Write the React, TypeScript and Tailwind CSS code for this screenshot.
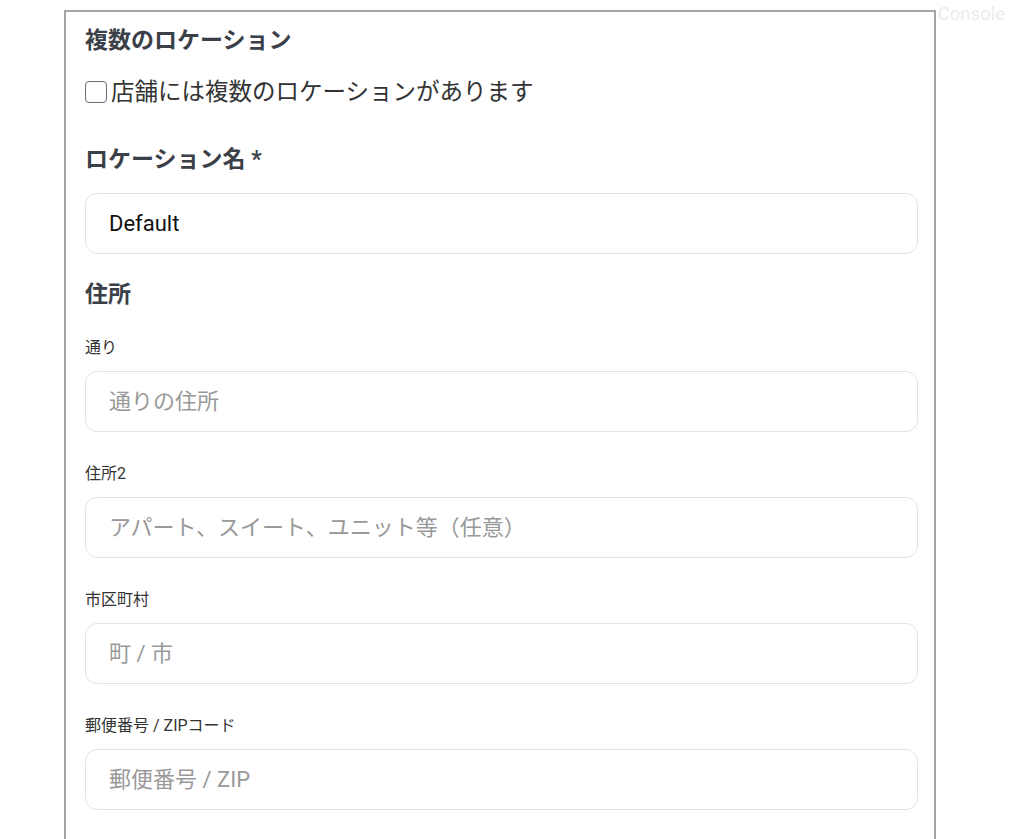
const fields = [
  { label: "通り", placeholder: "通りの住所" },
  { label: "住所2", placeholder: "アパート、スイート、ユニット等（任意）" },
  { label: "市区町村", placeholder: "町 / 市" },
  { label: "郵便番号 / ZIPコード", placeholder: "郵便番号 / ZIP" },
];

export default function App() {
  return (
    <div
      className="relative h-[839px] w-[1024px] overflow-hidden bg-white"
      style={{ fontFamily: '"Roboto", "Noto Sans CJK JP", sans-serif' }}
    >
      <span className="absolute right-[19px] top-[1px] text-[18.5px] text-[#ececec]">Console</span>

      <div className="relative ml-[64px] mt-[10px] h-[900px] w-[872px] border-2 border-[#a3a3a3] pl-[19px] pr-[16px] pt-[13px]">
        <h2 className="text-[23px] font-bold leading-[32px] text-[#3b4048]">複数のロケーション</h2>

        <label className="mt-[19px] flex items-center gap-[4px] text-[23.5px] leading-[32px] text-[#333]">
          <span className="h-[22px] w-[22px] shrink-0 rounded-[4px] border-[1.5px] border-[#6b6b6b] bg-white" />
          店舗には複数のロケーションがあります
        </label>

        <h2 className="mt-[36px] text-[23px] font-bold leading-[32px] text-[#3b4048]">ロケーション名 *</h2>
        <div className="mt-[17px] flex h-[61px] items-center rounded-[12px] border border-[#e3e3e3] px-[23px] text-[22px] text-[#111]">
          Default
        </div>

        <h2 className="mt-[25px] text-[23px] font-bold leading-[32px] text-[#3b4048]">住所</h2>

        {fields.map((f, i) => (
          <div key={f.label} className={i === 0 ? "mt-[27px]" : "mt-[32px]"}>
            <div className="text-[16px] leading-[20px] text-[#333]">{f.label}</div>
            <div className="mt-[13px] flex h-[61px] items-center rounded-[12px] border border-[#e3e3e3] px-[23px] text-[22px] text-[#999]">
              {f.placeholder}
            </div>
          </div>
        ))}
      </div>
    </div>
  );
}
